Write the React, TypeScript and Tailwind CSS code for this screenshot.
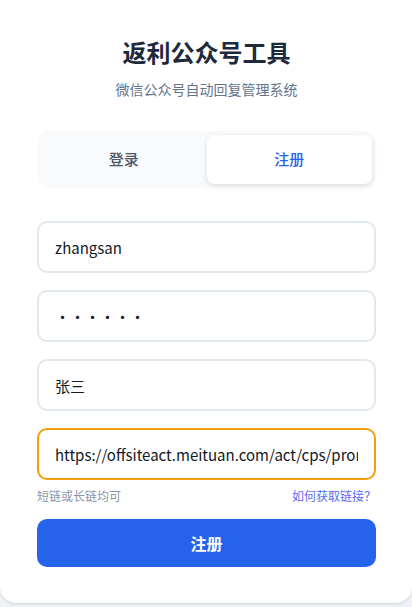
import React from "react";

export default function App() {
  const font = { fontFamily: '"Noto Sans CJK SC", "Noto Sans", sans-serif' };
  return (
    <div className="min-h-screen bg-[#eef1f6]" style={font}>
      <div className="bg-white rounded-b-2xl h-[603px] pl-[37px] pr-[36px] pt-[36px] shadow-sm">
        <h1 className="text-center text-[24px] leading-[32px] font-bold text-[#1e293b]">返利公众号工具</h1>
        <p className="mt-[11px] text-center text-[14px] leading-[20px] text-[#64748b]">微信公众号自动回复管理系统</p>

        <div className="mt-[32px] bg-[#f8fafc] rounded-xl p-[4px] flex h-[57px]">
          <button className="flex-1 rounded-lg text-[15px] font-medium text-[#4b5563]">登录</button>
          <button className="flex-1 rounded-lg bg-white shadow-[0_2px_6px_rgba(0,0,0,0.12)] text-[15px] font-medium text-[#2563eb]">注册</button>
        </div>

        <div className="mt-[33px] flex flex-col gap-[17px]">
          <input
            readOnly
            value="zhangsan"
            className="h-[52px] w-full rounded-[10px] border-2 border-[#e2e8f0] px-[16px] text-[15px] text-[#111827] outline-none"
          />
          <input
            readOnly
            type="password"
            value="123456"
            className="h-[52px] w-full rounded-[10px] border-2 border-[#e2e8f0] px-[16px] text-[15px] text-[#111827] outline-none"
          />
          <input
            readOnly
            value="张三"
            className="h-[52px] w-full rounded-[10px] border-2 border-[#e2e8f0] px-[16px] text-[15px] text-[#111827] outline-none"
          />
          <div>
            <input
              readOnly
              value="https://offsiteact.meituan.com/act/cps/promotion?p=abc"
              className="h-[52px] w-full rounded-[10px] border-2 border-[#f59e0b] px-[16px] text-[15px] text-[#111827] outline-none"
            />
            <div className="mt-[8px] flex justify-between text-[12px] leading-[16px]">
              <span className="text-[#8b95a5]">短链或长链均可</span>
              <span className="text-[#5b6cf0]">如何获取链接？</span>
            </div>
          </div>
        </div>

        <button className="mt-[15px] h-[48px] w-full rounded-[10px] bg-[#2563eb] text-white text-[16px] font-bold">注册</button>
      </div>
    </div>
  );
}
